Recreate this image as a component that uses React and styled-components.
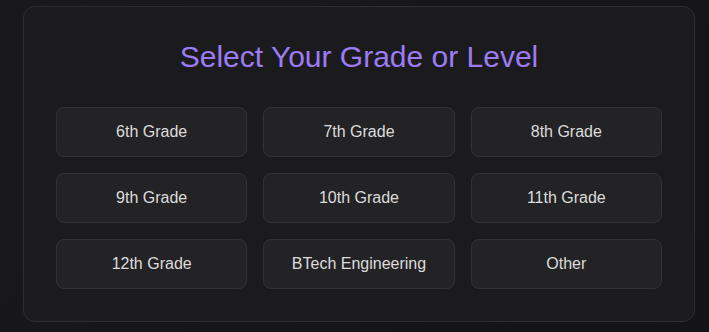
import React, { useState } from "react";
import styled, { createGlobalStyle } from "styled-components";

const GlobalStyle = createGlobalStyle`
  html, body {
    margin: 0;
    padding: 0;
    background: linear-gradient(135deg, #19191b 0%, #141416 100%);
    min-height: 100vh;
    font-family: "Liberation Sans", Arial, sans-serif;
  }
`;

const Page = styled.div`
  padding: 6px 14px 0 23px;
`;

const Card = styled.div`
  box-sizing: border-box;
  width: 672px;
  background-color: #1b1b1d;
  border: 1px solid #2f2f32;
  border-radius: 12px;
  padding: 32px;
`;

const Title = styled.h2`
  margin: 0 0 32px;
  text-align: center;
  font-weight: 400;
  font-size: 30px;
  line-height: 36px;
  color: #9b7cf4;
`;

const Grid = styled.div`
  display: grid;
  grid-template-columns: repeat(3, 1fr);
  gap: 16px;
`;

const GradeButton = styled.button`
  height: 50px;
  background-color: ${(p) => (p.$active ? "#2a2540" : "#232325")};
  border: 1px solid ${(p) => (p.$active ? "#9b7cf4" : "#323235")};
  border-radius: 8px;
  color: #dcdcdc;
  font-family: "Liberation Sans", Arial, sans-serif;
  font-size: 16px;
  cursor: pointer;
`;

const grades = [
  "6th Grade",
  "7th Grade",
  "8th Grade",
  "9th Grade",
  "10th Grade",
  "11th Grade",
  "12th Grade",
  "BTech Engineering",
  "Other",
];

const App = () => {
  const [selected, setSelected] = useState(null);

  return (
    <>
      <GlobalStyle />
      <Page>
        <Card>
          <Title>Select Your Grade or Level</Title>
          <Grid>
            {grades.map((g) => (
              <GradeButton
                key={g}
                $active={selected === g}
                onClick={() => setSelected(g)}
              >
                {g}
              </GradeButton>
            ))}
          </Grid>
        </Card>
      </Page>
    </>
  );
};

export default App;
